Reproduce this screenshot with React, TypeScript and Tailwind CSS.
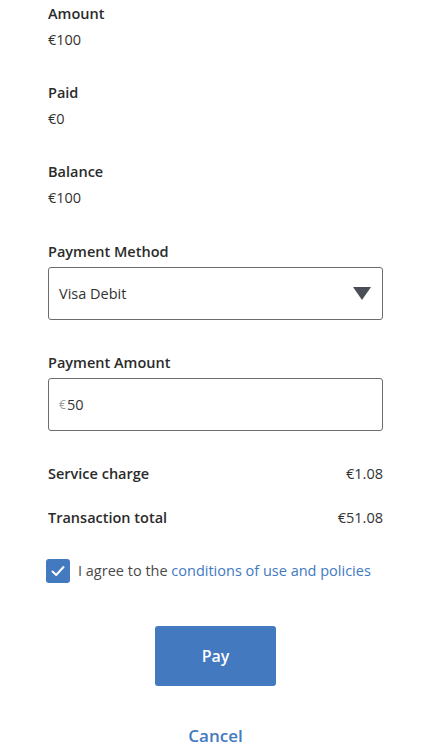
import React from "react";

const font = { fontFamily: '"Open Sans", "Noto Sans", sans-serif' };

const Field = ({ label, value, className = "" }: { label: string; value: string; className?: string }) => (
  <div className={className}>
    <div className="text-[14.5px] leading-5 font-semibold text-[#2b2b2b]">{label}</div>
    <div className="mt-[6px] text-[14.5px] leading-5 text-[#333]">{value}</div>
  </div>
);

export default function App() {
  return (
    <div className="min-h-screen bg-white pl-[48px] pr-[50px] pt-[4px]" style={font}>
      <Field label="Amount" value="€100" />
      <Field label="Paid" value="€0" className="mt-[33px]" />
      <Field label="Balance" value="€100" className="mt-[33px]" />

      <div className="mt-[34px] text-[14.5px] leading-5 font-semibold text-[#2b2b2b]">Payment Method</div>
      <div className="mt-[5px] h-[53px] border border-[#6b6b6b] rounded-[3px] flex items-center justify-between pl-[10px] pr-[11px]">
        <span className="text-[14.5px] text-[#333]">Visa Debit</span>
        <svg width="18" height="13" viewBox="0 0 18 13">
          <path d="M0 0 H18 L9 13 Z" fill="#4a4f55" />
        </svg>
      </div>

      <div className="mt-[33px] text-[14.5px] leading-5 font-semibold text-[#2b2b2b]">Payment Amount</div>
      <div className="mt-[5px] h-[53px] border border-[#6b6b6b] rounded-[3px] flex items-center pl-[10px]">
        <span className="text-[12px] text-[#9a9a9a] mr-[1px]">€</span>
        <span className="text-[14.5px] text-[#333]">50</span>
      </div>

      <div className="mt-[33px] flex justify-between text-[14.5px] leading-5">
        <span className="font-semibold text-[#2b2b2b]">Service charge</span>
        <span className="text-[#333]">€1.08</span>
      </div>
      <div className="mt-[24px] flex justify-between text-[14.5px] leading-5">
        <span className="font-semibold text-[#2b2b2b]">Transaction total</span>
        <span className="text-[#333]">€51.08</span>
      </div>

      <div className="mt-[31px] flex items-center -ml-[2px]">
        <div className="w-[24px] h-[24px] rounded-[3px] bg-[#4279bf] flex items-center justify-center">
          <svg width="16" height="16" viewBox="0 0 16 16" fill="none">
            <path d="M2.5 8.5 L6.2 12 L13.5 4" stroke="white" strokeWidth="2" strokeLinecap="round" strokeLinejoin="round" />
          </svg>
        </div>
        <span className="ml-[8px] text-[14.5px] text-[#4a4a4a]">
          I agree to the <span className="text-[#4279bf]">conditions of use and policies</span>
        </span>
      </div>

      <div className="mt-[43px] flex justify-center">
        <button className="w-[121px] h-[60px] rounded-[3px] bg-[#4279bf] text-white text-[16px] font-semibold">Pay</button>
      </div>
      <div className="mt-[38px] flex justify-center">
        <button className="text-[17px] font-semibold text-[#4279bf] leading-6">Cancel</button>
      </div>
    </div>
  );
}
